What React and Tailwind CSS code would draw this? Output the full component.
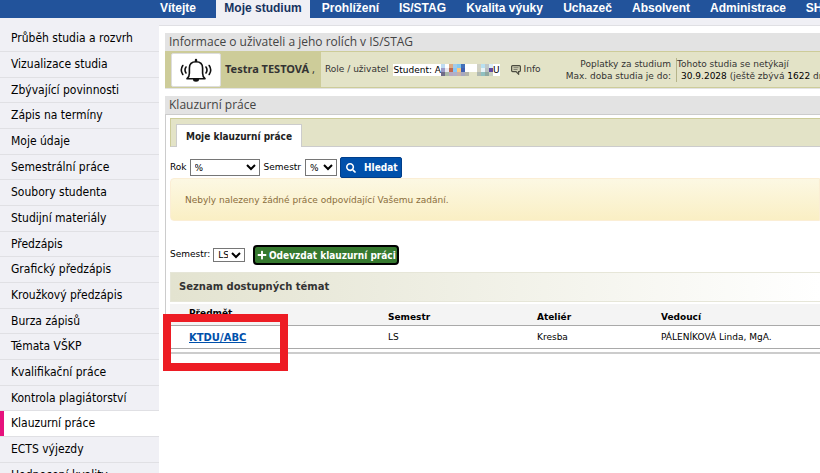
import { FaSearch, FaPlus } from "react-icons/fa";

const TOP_NAV = [
  { label: "Vítejte", width: "w-[76px]" },
  { label: "Moje studium", width: "w-[94px]", active: true },
  { label: "Prohlížení", width: "w-[81px]" },
  { label: "IS/STAG", width: "w-[63px]" },
  { label: "Kvalita výuky", width: "w-[101px]" },
  { label: "Uchazeč", width: "w-[65px]" },
  { label: "Absolvent", width: "w-[82px]" },
  { label: "Administrace", width: "w-[92px]" },
  { label: "SH", width: "w-[40px]" },
];

const SIDE_NAV = [
  "Průběh studia a rozvrh",
  "Vizualizace studia",
  "Zbývající povinnosti",
  "Zápis na termíny",
  "Moje údaje",
  "Semestrální práce",
  "Soubory studenta",
  "Studijní materiály",
  "Předzápis",
  "Grafický předzápis",
  "Kroužkový předzápis",
  "Burza zápisů",
  "Témata VŠKP",
  "Kvalifikační práce",
  "Kontrola plagiátorství",
  "Klauzurní práce",
  "ECTS výjezdy",
  "Hodnocení kvality",
];

const ACTIVE_ITEM = "Klauzurní práce";

const TOPICS = [
  { subject: "KTDU/ABC", semester: "LS", studio: "Kresba", lead: "PÁLENÍKOVÁ Linda, MgA." },
];

// Coloured cells that cover the personal number
const MASK = [
  ["bg-[#bfdcf2]", "bg-[#ffffff]", "bg-[#dcab84]", "bg-[#a3cbe8]", "bg-[#84c8f0]", "bg-[#4470b8]", "bg-white", "bg-white", "bg-white", "bg-[#cfd0c4]", "bg-[#b8e0f0]", "bg-[#c0c8c8]", "bg-[#dceef8]"],
  ["bg-[#9c9cc8]", "bg-[#e8e8f0]", "bg-[#c06850]", "bg-[#88c8f8]", "bg-[#f8c880]", "bg-[#4060b0]", "bg-white", "bg-white", "bg-white", "bg-[#d0d0c0]", "bg-[#e8f4f8]", "bg-[#b8c0c0]", "bg-[#6048a0]"],
  ["bg-[#706c88]", "bg-[#a8b8a8]", "bg-[#b8a8c0]", "bg-[#b0b0c8]", "bg-[#c8b0a8]", "bg-[#a8a8c0]", "bg-[#b4b4a8]", "bg-[#e3e3c7]", "bg-[#e3e3c7]", "bg-[#b0b8b0]", "bg-[#90c0c0]", "bg-[#90a8a0]", "bg-[#c8d0c0]"],
];

function TopNav() {
  return (
    <nav className="flex h-[18px] shrink-0 overflow-hidden bg-[#22539b] pl-[140px] font-['Liberation_Sans',Arial,sans-serif] text-[12px] font-bold leading-[17px]">
      {TOP_NAV.map(({ label, width, active }) => (
        <a
          key={label}
          href="#"
          className={`shrink-0 whitespace-nowrap text-center ${width} ${active ? "bg-[#f0f0f5] text-[#16335f]" : "text-white"}`}
        >
          {label}
        </a>
      ))}
    </nav>
  );
}

function SideNav() {
  return (
    <aside className="w-[159px] shrink-0 bg-[#f0f0f5] pt-2">
      <ul>
        {SIDE_NAV.map((label) => (
          <li key={label} className="h-[26px] border-b border-[#e0e0e4] nth-[3n]:h-[25px]">
            <a
              href="#"
              className={`block h-full text-[12px] leading-[25px] text-black ${
                label === ACTIVE_ITEM ? "border-l-4 border-[#e6127d] bg-white pl-[7px]" : "pl-[11px]"
              }`}
            >
              {label}
            </a>
          </li>
        ))}
      </ul>
    </aside>
  );
}

function BellIcon() {
  return (
    <svg viewBox="0 0 32 24" className="h-6 w-8" fill="none" stroke="#111" strokeWidth="1.6" strokeLinecap="round">
      <path d="M7 20.700h18c-1.800-1.500-2.400-3-2.400-5.500V10c0-4-2.700-6.300-6.600-6.300S9.400 6 9.400 10v5.200c0 2.500-.6 4-2.400 5.500z" strokeLinejoin="round" />
      <path d="M16 3V2" strokeWidth="2.400" />
      <path d="M13.800 21.500h4.400a2.200 1.400 0 0 1-4.400 0z" fill="#111" />
      <path d="M6 9c-1.200 1.800-1.200 4.200 0 6M2.800 7.500c-1.900 2.800-1.900 6.200 0 9M26 9c1.200 1.800 1.200 4.200 0 6M29.200 7.500c1.900 2.800 1.900 6.200 0 9" />
    </svg>
  );
}

function InfoIcon() {
  return (
    <svg viewBox="0 0 10 10" className="h-2.5 w-2.5" fill="none" stroke="#4c4c40" strokeWidth="1.200">
      <path d="M1.600.6h6.800a1 1 0 0 1 1 1v4a1 1 0 0 1-1 1H7.600v2.600L5 6.600H1.600a1 1 0 0 1-1-1v-4a1 1 0 0 1 1-1z" fill="#d0d0b4" />
      <path d="M2.500 2.700h5M2.500 4.500h4" stroke="#77776a" strokeWidth=".9" />
    </svg>
  );
}

function UserBar() {
  return (
    <section className="ml-[6px]">
      <h2 className="h-[18px] bg-[#e3e3e3] pl-[4px] font-['Open_Sans',sans-serif] text-[12px] leading-[18px] text-[#444]">
        Informace o uživateli a jeho rolích v IS/STAG
      </h2>
      <div className="flex h-[37px] border-b border-t border-[#cdcc99] bg-[#e3e3c7] font-['DejaVu_Sans',Verdana,sans-serif] text-[9px] text-[#333]">
        <div className="flex w-[156px] shrink-0 items-center bg-[#cdcc99] pl-[6px]">
          <div className="flex h-[34px] w-[50px] shrink-0 items-center justify-center rounded-xs border border-[#ddd] bg-white">
            <BellIcon />
          </div>
          <span className="whitespace-nowrap pl-1 font-['Noto_Sans',sans-serif] text-[11px]"><b>Testra TESTOVÁ</b> ,</span>
        </div>
        <div className="flex shrink-0 items-center whitespace-nowrap pl-[4px] pt-px">
          <span>Role / uživatel</span>
          <span className="ml-[5px] flex items-center bg-white leading-[12px] text-black">
            Student: A
            <span className="grid grid-cols-13">
              {MASK.flat().map((color, i) => (
                <span key={i} className={`h-1 w-1 ${color}`} />
              ))}
            </span>
            U
          </span>
          <a href="#" className="ml-[11px] flex items-center gap-[3px]">
            <InfoIcon />
            Info
          </a>
        </div>
        <dl className="ml-auto grid shrink-0 grid-cols-[auto_144px] content-center whitespace-nowrap leading-[12px]">
          <dt className="pr-[5px] text-right">Poplatky za studium</dt>
          <dd className="border-l border-[#b5b48a]">Tohoto studia se netýkají</dd>
          <dt className="pr-[5px] text-right">Max. doba studia je do:</dt>
          <dd className="border-l border-[#b5b48a] pl-[4px]">
            <span className="text-black">30.9.2028</span> (ještě zbývá <span className="text-black">1622</span> dní)
          </dd>
        </dl>
      </div>
      <div className="h-px bg-[#e3e3e3]" />
    </section>
  );
}

function SearchForm() {
  return (
    <form className="flex items-center" onSubmit={(e) => e.preventDefault()}>
      <label htmlFor="year">Rok</label>
      <select id="year" className="ml-[3px] h-[17px] w-[70px] border border-[#767676] bg-white text-[9px]">
        <option>%</option>
      </select>
      <label htmlFor="semester" className="ml-[4px]">Semestr</label>
      <select id="semester" className="ml-[4px] h-[17px] w-8 border border-[#767676] bg-white text-[9px]">
        <option>%</option>
      </select>
      <button className="ml-[3px] flex h-[21px] w-[62px] items-center gap-2 rounded-xs border border-[#003e8a] bg-[#0050ab] pl-[5px] font-['DejaVu_Sans_Condensed','DejaVu_Sans',sans-serif] text-[10px] font-bold text-white">
        <FaSearch className="h-2.5 w-2.5 shrink-0" />
        Hledat
      </button>
    </form>
  );
}

function SubmitForm() {
  return (
    <form className="mt-6 flex items-center" onSubmit={(e) => e.preventDefault()}>
      <label htmlFor="term">Semestr:</label>
      <select id="term" className="ml-[3px] h-[14px] w-8 border border-[#767676] bg-white text-[9px]">
        <option>LS</option>
      </select>
      <button className="ml-2 flex h-5 w-[146px] items-center justify-center gap-[2px] whitespace-nowrap rounded-sm border-2 border-black bg-[#36792f] font-['DejaVu_Sans_Condensed','DejaVu_Sans',sans-serif] text-[10px] font-bold text-white">
        <FaPlus className="h-2.5 w-2.5 shrink-0" />
        Odevzdat klauzurní práci
      </button>
    </form>
  );
}

function TopicsTable() {
  return (
    <div className="relative mt-[2px]">
      <table className="w-full table-fixed border-collapse text-left text-black">
        <thead>
          <tr className="h-[21px] border-b border-[#a9a9a9] bg-[#f4f4f4]">
            <th className="w-[218px] pl-[19px] align-top leading-[19px]">Předmět</th>
            <th className="w-[149px] pt-[6px]">Semestr</th>
            <th className="w-[124px] pt-[6px]">Ateliér</th>
            <th className="pt-[6px]">Vedoucí</th>
          </tr>
        </thead>
        <tbody>
          {TOPICS.map((topic) => (
            <tr key={topic.subject} className="h-[23px] border-b border-[#a9a9a9] *:pt-[2px]">
              <td className="pl-[19px]">
                <a href="#" className="text-[10px] font-bold text-[#0050ab] underline">{topic.subject}</a>
              </td>
              <td>{topic.semester}</td>
              <td>{topic.studio}</td>
              <td>{topic.lead}</td>
            </tr>
          ))}
        </tbody>
      </table>
      <div className="absolute -left-[7px] top-[10px] h-[57px] w-[125px] border-8 border-[#ed1c24]" />
    </div>
  );
}

export default function App() {
  return (
    <div className="flex h-screen flex-col overflow-hidden bg-white font-['DejaVu_Sans_Condensed','Noto_Sans',sans-serif]">
      <TopNav />
      <div className="flex min-h-0 flex-1">
        <SideNav />
        <main className="min-w-0 flex-1 overflow-hidden">
          <div className="mb-[7px] h-2 border-b border-[#e0e0e4] bg-[#f0f0f5]" />
          <UserBar />
          <section className="ml-[6px] mt-[7px]">
            <h2 className="h-[19px] border-b border-[#ccc] bg-[#e3e3e3] pl-[4px] font-['Open_Sans',sans-serif] text-[12px] leading-[18px] text-[#444]">
              Klauzurní práce
            </h2>
            <div className="border-b-2 border-l border-[#ccc] pb-[3px] pl-[4px] pt-[3px] font-['DejaVu_Sans',Verdana,sans-serif] text-[9px] text-black">
              <div className="mb-[10px] flex h-[29px] items-end border-b border-l border-t border-b-[#ccc] border-l-[#cdcc99] border-t-[#cdcc99] bg-[#e3e3c7] pl-[5px]" role="tablist">
                <button
                  role="tab"
                  aria-selected="true"
                  className="-mb-px h-[23px] w-[126px] whitespace-nowrap border border-b-0 border-[#ccc] bg-white font-['DejaVu_Sans_Condensed','DejaVu_Sans',sans-serif] text-[10px] font-bold text-[#222]"
                >
                  Moje klauzurní práce
                </button>
              </div>
              <SearchForm />
              <p className="h-[43px] rounded-l-sm border border-[#fbeed5] bg-linear-to-b from-[#fcf8e3] to-[#faefc4] pl-[14px] leading-[42px] text-[#8a6d3b]">
                Nebyly nalezeny žádné práce odpovídající Vašemu zadání.
              </p>
              <SubmitForm />
              <h3 className="mt-[7px] h-[30px] border border-r-0 border-[#e6e6d8] bg-linear-to-r from-[#e3e3d0] to-white pl-2 text-[10px] font-bold leading-7 text-[#333]">
                Seznam dostupných témat
              </h3>
              <TopicsTable />
            </div>
          </section>
        </main>
      </div>
    </div>
  );
}
